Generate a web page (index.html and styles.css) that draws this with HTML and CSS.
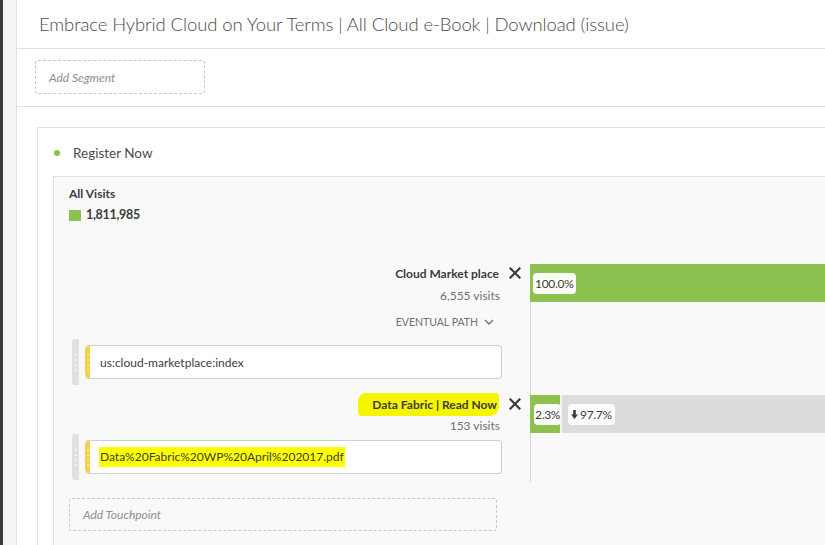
FILE: index.html
```html
<!DOCTYPE html>
<html>
<head>
<meta charset="utf-8">
<link rel="stylesheet" href="styles.css">
</head>
<body>
<div class="app">
  <div class="rail"></div>
  <div class="gutter"></div>
  <div class="main">
    <div class="header"><h1 class="title">Embrace Hybrid Cloud on Your Terms | All Cloud e-Book | Download (issue)</h1></div>
    <div class="segments"><div class="add-segment">Add Segment</div></div>
    <div class="panel">
      <div class="panel-title"><span class="dot"></span>Register Now</div>
      <div class="viz">
        <div class="all-visits">
          <div class="av-label">All Visits</div>
          <div class="av-value"><span class="swatch"></span>1,811,985</div>
        </div>

        <div class="step step-1">
          <div class="step-left">
            <div class="step-head">
              <span class="step-name">Cloud Market place</span>
              <svg class="close" viewBox="0 0 12 12" width="12" height="12"><path d="M1.5 1.5 L10.5 10.5 M10.5 1.5 L1.5 10.5" stroke="#3c3c3c" stroke-width="2.2" stroke-linecap="square"/></svg>
            </div>
            <div class="step-visits">6,555 visits</div>
            <div class="eventual">EVENTUAL PATH <svg class="chev" viewBox="0 0 10 6" width="10" height="6"><path d="M1 1 L5 5 L9 1" fill="none" stroke="#707070" stroke-width="1.4"/></svg></div>
            <div class="tp">
              <div class="handle"><i></i><i></i><i></i><i></i></div>
              <div class="card"><span class="stripe"><i></i><i></i><i></i><i></i></span><span class="card-text">us:cloud-marketplace:index</span></div>
            </div>
          </div>
          <div class="step-right">
            <div class="bar bar-full"><span class="pct">100.0%</span></div>
          </div>
        </div>

        <div class="step step-2">
          <div class="step-left">
            <div class="step-head">
              <span class="step-name hl-name">Data Fabric | Read Now</span>
              <svg class="close" viewBox="0 0 12 12" width="12" height="12"><path d="M1.5 1.5 L10.5 10.5 M10.5 1.5 L1.5 10.5" stroke="#3c3c3c" stroke-width="2.2" stroke-linecap="square"/></svg>
            </div>
            <div class="step-visits v2">153 visits</div>
            <div class="tp tp2">
              <div class="handle"><i></i><i></i><i></i><i></i></div>
              <div class="card"><span class="stripe"><i></i><i></i><i></i><i></i></span><span class="card-text hl-text">Data%20Fabric%20WP%20April%202017.pdf</span></div>
            </div>
          </div>
          <div class="step-right">
            <div class="bar bar-split"><span class="pct pct-a">2.3%</span><span class="pct pct-b"><svg class="down" viewBox="0 0 7 9" width="7" height="9"><path d="M2.2 0 H4.8 V4.5 H7 L3.5 9 L0 4.5 H2.2 Z" fill="#3a3a3a"/></svg>97.7%</span></div>
          </div>
        </div>

        <div class="add-tp">Add Touchpoint</div>
      </div>
    </div>
  </div>
</div>
</body>
</html>
```
FILE: styles.css
```css
* { box-sizing: border-box; }
html, body { margin: 0; padding: 0; height: 100%; overflow: hidden; }
body { font-family: "Lato", "Open Sans", sans-serif; color: #4b4b4b; background: #fff; }
.app { display: flex; height: 545px; }
.rail { width: 3px; background: #3a3a3a; flex: none; }
.gutter { width: 13px; background: #f4f4f4; flex: none; }
.main { flex: 1; border-left: 1px solid #e1e1e1; background: #fff; min-width: 0; overflow: hidden; }

.header { height: 49px; border-bottom: 1px solid #e1e1e1; padding-left: 22px; }
.title { margin: 0; font-weight: 300; font-size: 18.5px; line-height: 48px; color: #4b4b4b; white-space: nowrap; letter-spacing: -0.1px; }

.segments { height: 58px; border-bottom: 1px solid #e1e1e1; padding: 11px 0 0 18px; }
.add-segment { width: 170px; height: 34px; border: 1px dashed #c8c8c8; border-radius: 3px; font-style: italic; font-size: 12px; color: #8e8e8e; padding-left: 13px; line-height: 33px; }

.panel { margin: 20px 0 0 20px; border: 1px solid #e1e1e1; border-right: none; border-bottom: none; padding: 0 0 0 15px; height: 500px; }
.panel-title { height: 48px; display: flex; align-items: center; font-size: 13.5px; color: #4b4b4b; padding-top: 1px; }
.dot { width: 6px; height: 6px; border-radius: 50%; background: #8dc150; margin: 0 13px 0 1px; }

.viz { background: #f9f9f9; border: 1px solid #e1e1e1; border-right: none; border-bottom: none; height: 400px; padding-top: 9px; }
.all-visits { padding-left: 15px; height: 78px; }
.av-label { font-size: 12px; font-weight: 700; color: #3c3c3c; line-height: 16px; }
.av-value { display: flex; align-items: center; font-size: 12.5px; font-weight: 700; color: #3c3c3c; margin-top: 5px; line-height: 16px; letter-spacing: -0.3px; }
.swatch { width: 12px; height: 11px; background: #8dc150; margin-right: 5px; }

.step { display: flex; }
.step-left { width: 476px; flex: none; }
.step-right { flex: 1; border-left: 1px solid #d9d9d9; }
.step-1 { height: 131px; }
.step-2 { height: 87px; }

.step-head { display: flex; justify-content: flex-end; align-items: center; height: 18px; padding-right: 9px; }
.step-name { font-size: 12px; font-weight: 700; color: #3c3c3c; margin-right: 10px; }
.close { display: block; }
.step-visits { text-align: right; padding-right: 30px; font-size: 12px; color: #707070; line-height: 16px; margin-top: 6px; }
.step-visits.v2 { margin-top: 5px; }
.eventual { display: flex; justify-content: flex-end; align-items: center; padding-right: 36px; font-size: 10.5px; color: #707070; line-height: 16px; margin-top: 10px; }
.chev { margin-left: 6px; }

.tp { display: flex; margin: 9px 0 0 18px; }
.tp2 { margin-top: 0; }
.handle { width: 7px; height: 46px; background: #e1e1e1; border-radius: 3px 0 0 3px; display: flex; flex-direction: column; align-items: center; justify-content: center; gap: 3px; }
.handle i { width: 2px; height: 2px; background: #f4f4f4; border-radius: 50%; }
.card { margin: 6px 0 0 6px; width: 417px; height: 34px; background: #fff; border: 1px solid #cfcfcf; border-left: none; border-radius: 4px; display: flex; align-items: center; overflow: hidden; }
.stripe { width: 5px; align-self: stretch; background: #f8cf4a; display: flex; flex-direction: column; align-items: center; justify-content: center; gap: 3px; border-radius: 4px 0 0 4px; }
.stripe i { width: 2px; height: 2px; background: #fbe7a3; border-radius: 50%; }
.card-text { font-size: 12px; color: #3c3c3c; margin-left: 10px; }
.hl-text { background: #ffff00; padding: 2px 1px 3px 1px; margin-left: 9px; }
.hl-name { background: #f5f500; border-radius: 8px 3px 9px 4px; padding: 4px 2px 4px 14px; }

.bar { height: 38px; margin-left: -1px; display: flex; align-items: center; }
.bar-full { background: #8dc150; padding-left: 3px; }
.bar-split { background: linear-gradient(to right, #8dc150 0, #8dc150 30px, #f2f2f2 30px, #f2f2f2 32px, #dcdcdc 32px); padding-left: 4px; }
.pct { background: #fafcf6; border-radius: 4px; font-size: 12px; color: #3c3c3c; height: 21px; line-height: 21px; padding: 0 2px; letter-spacing: -0.3px; }
.pct-a { width: 27px; padding: 0 1px; background: #fbfbfb; }
.pct-b { margin-left: 7px; display: flex; align-items: center; gap: 2px; padding: 0 3px; background: #fbfbfb; }

.add-tp { margin: 16px 0 0 15px; width: 428px; height: 33px; border: 1px dashed #c8c8c8; border-radius: 3px; font-style: italic; font-size: 12px; color: #8e8e8e; padding-left: 13px; line-height: 31px; }
```
